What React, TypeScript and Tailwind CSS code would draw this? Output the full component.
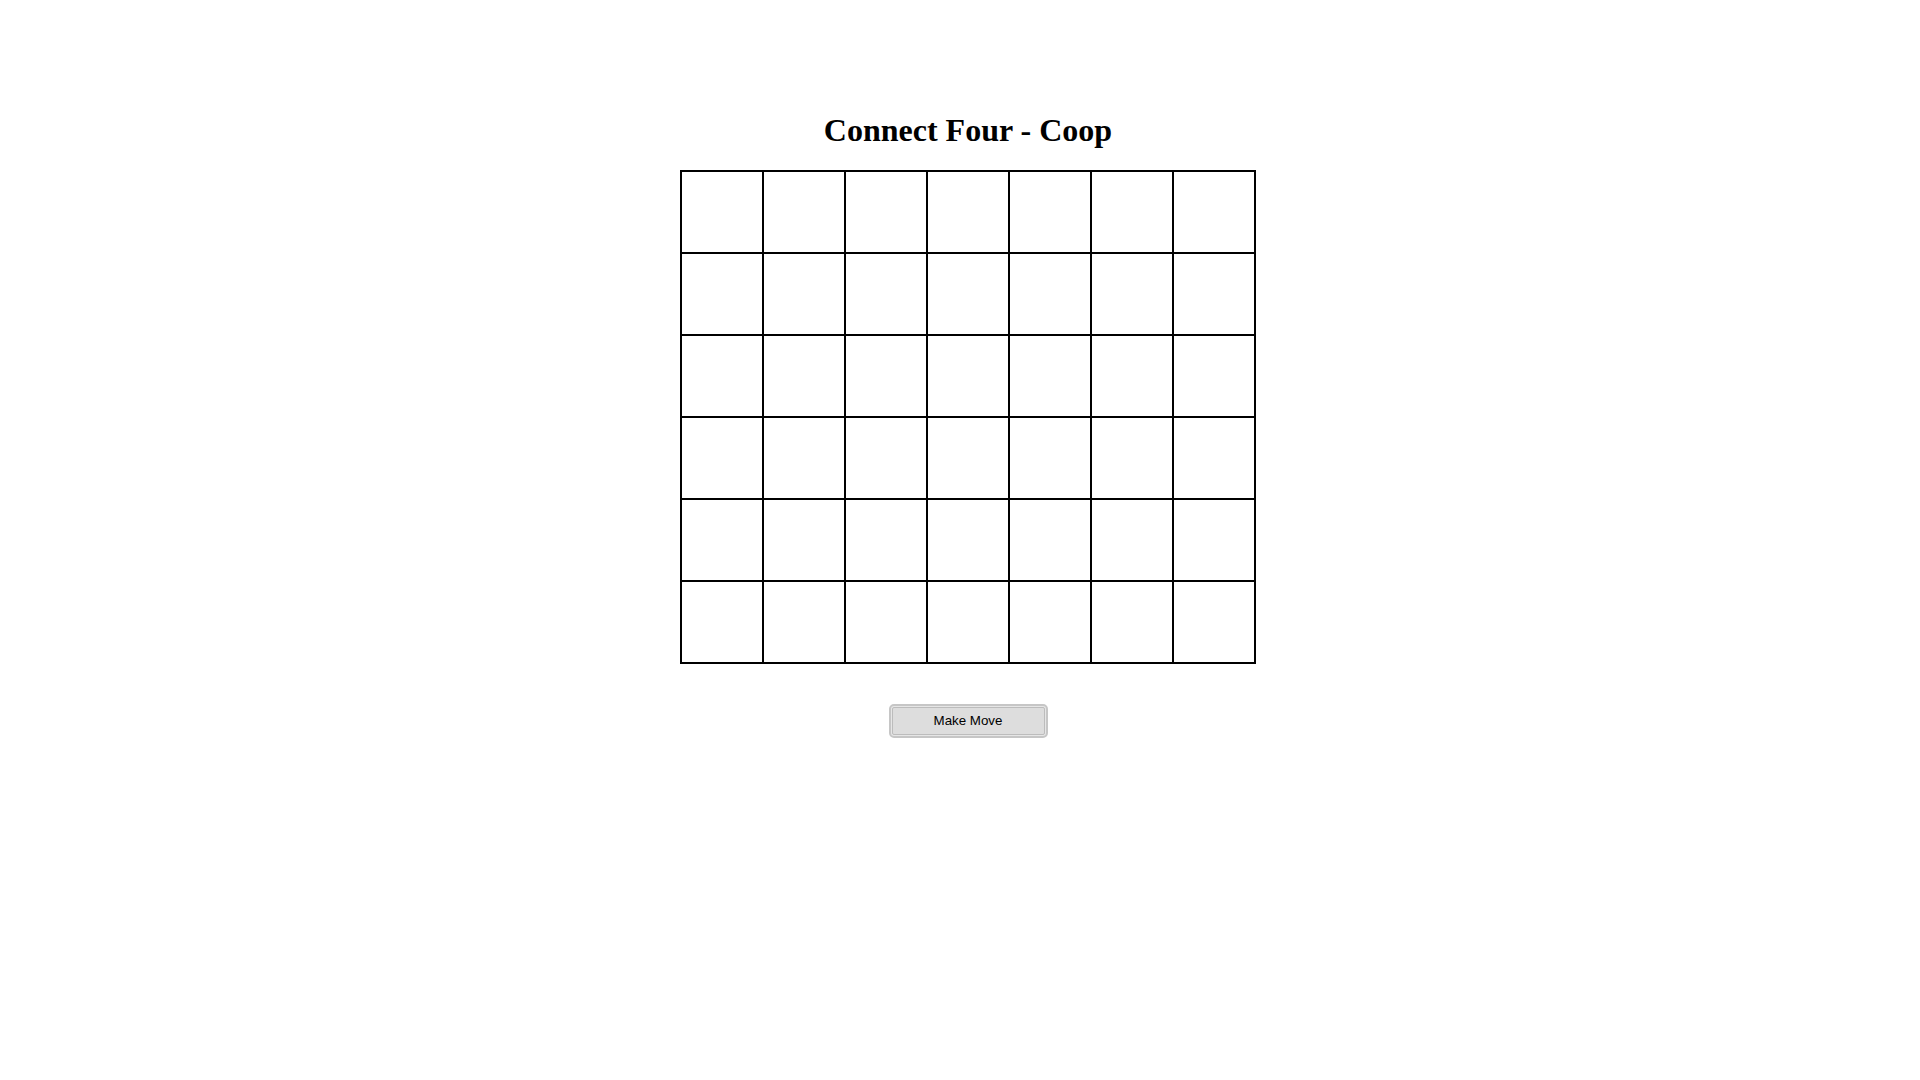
const ROWS = 6;
const COLS = 7;

function Board() {
    return (
        <div className="grid grid-cols-[repeat(7,82px)] border border-black">
            {Array.from({ length: ROWS * COLS }).map((_, i) => (
                <div key={i} className="w-[82px] h-[82px] border border-black bg-white" />
            ))}
        </div>
    );
}

export default function App() {
    return (
        <div className="min-h-[1193px] bg-white pl-[16px] pt-[112px] flex flex-col items-center">
            <h1 className="text-[32px] leading-[36px] font-bold text-black font-['Liberation_Serif',serif]">
                Connect Four - Coop
            </h1>
            <div className="mt-[22px]">
                <Board />
            </div>
            <button
                type="button"
                className="mt-[40px] w-[159px] h-[34px] rounded-[5px] border-2 border-[#c6c6c6] bg-[#e6e6e6] p-[1px]"
            >
                <span className="flex h-full w-full items-center justify-center rounded-[2px] border border-[#bcbcbc] bg-[#dddddd] text-[13.33px] text-black font-['Liberation_Sans',Arial,sans-serif]">
                    Make Move
                </span>
            </button>
        </div>
    );
}
